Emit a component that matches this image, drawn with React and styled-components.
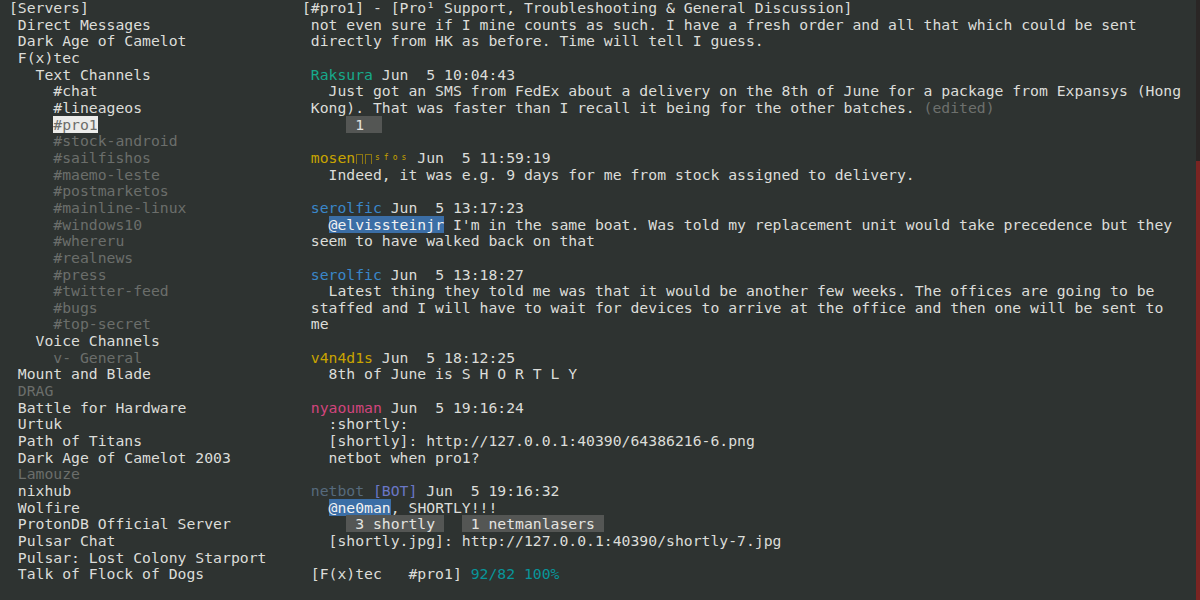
import React from 'react';
import styled, { createGlobalStyle } from 'styled-components';

const ROW = 600 / 36;

const GlobalStyle = createGlobalStyle`
  html, body {
    margin: 0;
    padding: 0;
    background: #2e3331;
  }
  body {
    font-family: "DejaVu Sans Mono", "Liberation Mono", monospace;
    font-size: 14.75px;
    color: #dcddd9;
  }
`;

const sidebar = [
  { text: '[Servers]', col: 1 },
  { text: 'Direct Messages', col: 2 },
  { text: 'Dark Age of Camelot', col: 2 },
  { text: 'F(x)tec', col: 2 },
  { text: 'Text Channels', col: 4 },
  { text: '#chat', col: 6 },
  { text: '#lineageos', col: 6 },
  { text: '#pro1', col: 6, selected: true },
  { text: '#stock-android', col: 6, dim: true },
  { text: '#sailfishos', col: 6, dim: true },
  { text: '#maemo-leste', col: 6, dim: true },
  { text: '#postmarketos', col: 6, dim: true },
  { text: '#mainline-linux', col: 6, dim: true },
  { text: '#windows10', col: 6, dim: true },
  { text: '#whereru', col: 6, dim: true },
  { text: '#realnews', col: 6, dim: true },
  { text: '#press', col: 6, dim: true },
  { text: '#twitter-feed', col: 6, dim: true },
  { text: '#bugs', col: 6, dim: true },
  { text: '#top-secret', col: 6, dim: true },
  { text: 'Voice Channels', col: 4 },
  { text: 'v- General', col: 6, dim: true },
  { text: 'Mount and Blade', col: 2 },
  { text: 'DRAG', col: 2, dim: true },
  { text: 'Battle for Hardware', col: 2 },
  { text: 'Urtuk', col: 2 },
  { text: 'Path of Titans', col: 2 },
  { text: 'Dark Age of Camelot 2003', col: 2 },
  { text: 'Lamouze', col: 2, dim: true },
  { text: 'nixhub', col: 2 },
  { text: 'Wolfire', col: 2 },
  { text: 'ProtonDB Official Server', col: 2 },
  { text: 'Pulsar Chat', col: 2 },
  { text: 'Pulsar: Lost Colony Starport', col: 2 },
  { text: 'Talk of Flock of Dogs', col: 2 },
];

const GOLD = '#c9a400';

const messages = [
  {
    lines: [
      ['not even sure if I mine counts as such. I have a fresh order and all that which could be sent'],
      ['directly from HK as before. Time will tell I guess.'],
    ],
  },
  {
    nick: 'Raksura',
    color: '#17a98b',
    time: 'Jun  5 10:04:43',
    lines: [
      ['  Just got an SMS from FedEx about a delivery on the 8th of June for a package from Expansys (Hong'],
      ['Kong). That was faster than I recall it being for the other batches. ', { muted: '(edited)' }],
      ['    ', { reaction: ' 1  ' }],
    ],
  },
  {
    nick: 'mosen',
    color: GOLD,
    missing: 2,
    sup: 'sfos',
    time: 'Jun  5 11:59:19',
    lines: [['  Indeed, it was e.g. 9 days for me from stock assigned to delivery.']],
  },
  {
    nick: 'serolfic',
    color: '#3a87c9',
    time: 'Jun  5 13:17:23',
    lines: [
      ['  ', { mention: '@elvissteinjr' }, " I'm in the same boat. Was told my replacement unit would take precedence but they"],
      ['seem to have walked back on that'],
    ],
  },
  {
    nick: 'serolfic',
    color: '#3a87c9',
    time: 'Jun  5 13:18:27',
    lines: [
      ['  Latest thing they told me was that it would be another few weeks. The offices are going to be'],
      ['staffed and I will have to wait for devices to arrive at the office and then one will be sent to'],
      ['me'],
    ],
  },
  {
    nick: 'v4n4d1s',
    color: GOLD,
    time: 'Jun  5 18:12:25',
    lines: [['  8th of June is S H O R T L Y']],
  },
  {
    nick: 'nyaouman',
    color: '#d2457d',
    time: 'Jun  5 19:16:24',
    lines: [
      ['  :shortly:'],
      ['  [shortly]: http://127.0.0.1:40390/64386216-6.png'],
      ['  netbot when pro1?'],
    ],
  },
  {
    nick: 'netbot',
    color: '#566a7c',
    bot: true,
    time: 'Jun  5 19:16:32',
    lines: [
      ['  ', { mention: '@ne0man' }, ', SHORTLY!!!'],
      ['    ', { reaction: ' 3 shortly ' }, '  ', { reaction: ' 1 netmanlasers ' }],
      ['  [shortly.jpg]: http://127.0.0.1:40390/shortly-7.jpg'],
    ],
  },
];

const renderPart = (part, i) => {
  if (typeof part === 'string') return <React.Fragment key={i}>{part}</React.Fragment>;
  if (part.mention) return <Mention key={i}>{part.mention}</Mention>;
  if (part.reaction) return <Reaction key={i}>{part.reaction}</Reaction>;
  return <Muted key={i}>{part.muted}</Muted>;
};

const Message = ({ msg }) => (
  <MessageBlock>
    {msg.nick && (
      <Line>
        <Nick $color={msg.color}>{msg.nick}</Nick>
        {Array.from({ length: msg.missing || 0 }).map((_, i) => (
          <MissingGlyph key={i} $color={msg.color} />
        ))}
        {msg.sup &&
          msg.sup.split('').map((c, i) => (
            <SupCell key={i} $color={msg.color}>
              <small>{c}</small>
            </SupCell>
          ))}
        {msg.bot && <Bot> [BOT]</Bot>} {msg.time}
      </Line>
    )}
    {msg.lines.map((line, i) => (
      <Line key={i}>{line.map(renderPart)}</Line>
    ))}
  </MessageBlock>
);

const App = () => {
  const thumbTop = 161;

  return (
    <>
      <GlobalStyle />
      <Screen>
        <Sidebar>
          {sidebar.map(item => (
            <Line key={item.text} $indent={item.col}>
              <TreeItem $dim={item.dim} $selected={item.selected}>
                {item.text}
              </TreeItem>
            </Line>
          ))}
        </Sidebar>
        <Chat>
          <Header>[#pro1] - [Pro¹ Support, Troubleshooting &amp; General Discussion]</Header>
          <MessageList>
            {messages.map((msg, i) => (
              <Message key={i} msg={msg} />
            ))}
          </MessageList>
          <Status>
            [F(x)tec   #pro1] <Teal>92/82 100%</Teal>
          </Status>
        </Chat>
        <ScrollTrack>
          <ScrollGap style={{ height: thumbTop }} />
          <ScrollThumb />
        </ScrollTrack>
      </Screen>
    </>
  );
};
export default App;

const Screen = styled.div`
  display: flex;
  width: 1200px;
  height: 600px;
  overflow: hidden;
  background: #2e3331;
`;

const Sidebar = styled.div`
  display: flex;
  flex-direction: column;
  width: 34ch;
  flex-shrink: 0;
`;

const Line = styled.div`
  height: ${ROW}px;
  line-height: ${ROW}px;
  white-space: pre;
  padding-left: ${props => props.$indent || 0}ch;
`;

const TreeItem = styled.span`
  color: ${props => (props.$selected ? '#6c6e6b' : props.$dim ? '#6b6e6b' : '#dcddd9')};
  background: ${props => (props.$selected ? '#ececea' : 'transparent')};
`;

const Chat = styled.div`
  flex: 1;
  display: flex;
  flex-direction: column;
  padding-left: 1ch;
  overflow: hidden;
`;

const Header = styled(Line)`
  margin-left: -1ch;
`;

const MessageList = styled.div`
  display: flex;
  flex-direction: column;
  gap: ${ROW}px;
`;

const MessageBlock = styled.div`
  display: flex;
  flex-direction: column;
`;

const Nick = styled.span`
  color: ${props => props.$color};
`;

const Bot = styled.span`
  color: #6a77c6;
`;

const MissingGlyph = styled.span`
  display: inline-block;
  width: 1ch;
  height: ${ROW}px;
  vertical-align: top;
  &::before {
    content: '';
    display: block;
    box-sizing: border-box;
    width: 7px;
    height: 10px;
    margin: 4px auto 0;
    border: 1px solid ${props => props.$color};
    border-bottom: none;
    opacity: 0.6;
  }
`;

const SupCell = styled.span`
  display: inline-block;
  width: 1ch;
  height: ${ROW}px;
  vertical-align: top;
  text-align: center;
  color: ${props => props.$color};
  & > small {
    font-size: 8px;
    vertical-align: 5px;
  }
`;

const Mention = styled.span`
  background: #3b6ea6;
  color: #f2f2f2;
`;

const Reaction = styled.span`
  background: #545654;
  color: #e4e4e0;
`;

const Muted = styled.span`
  color: #6d706d;
`;

const Status = styled(Line)`
  margin-top: ${ROW}px;
`;

const Teal = styled.span`
  color: #08959a;
`;

const ScrollTrack = styled.div`
  width: 4px;
  flex-shrink: 0;
  display: flex;
  flex-direction: column;
`;

const ScrollGap = styled.div`
  background: #2a2625;
`;

const ScrollThumb = styled.div`
  flex: 1;
  background: #7a2422;
`;
